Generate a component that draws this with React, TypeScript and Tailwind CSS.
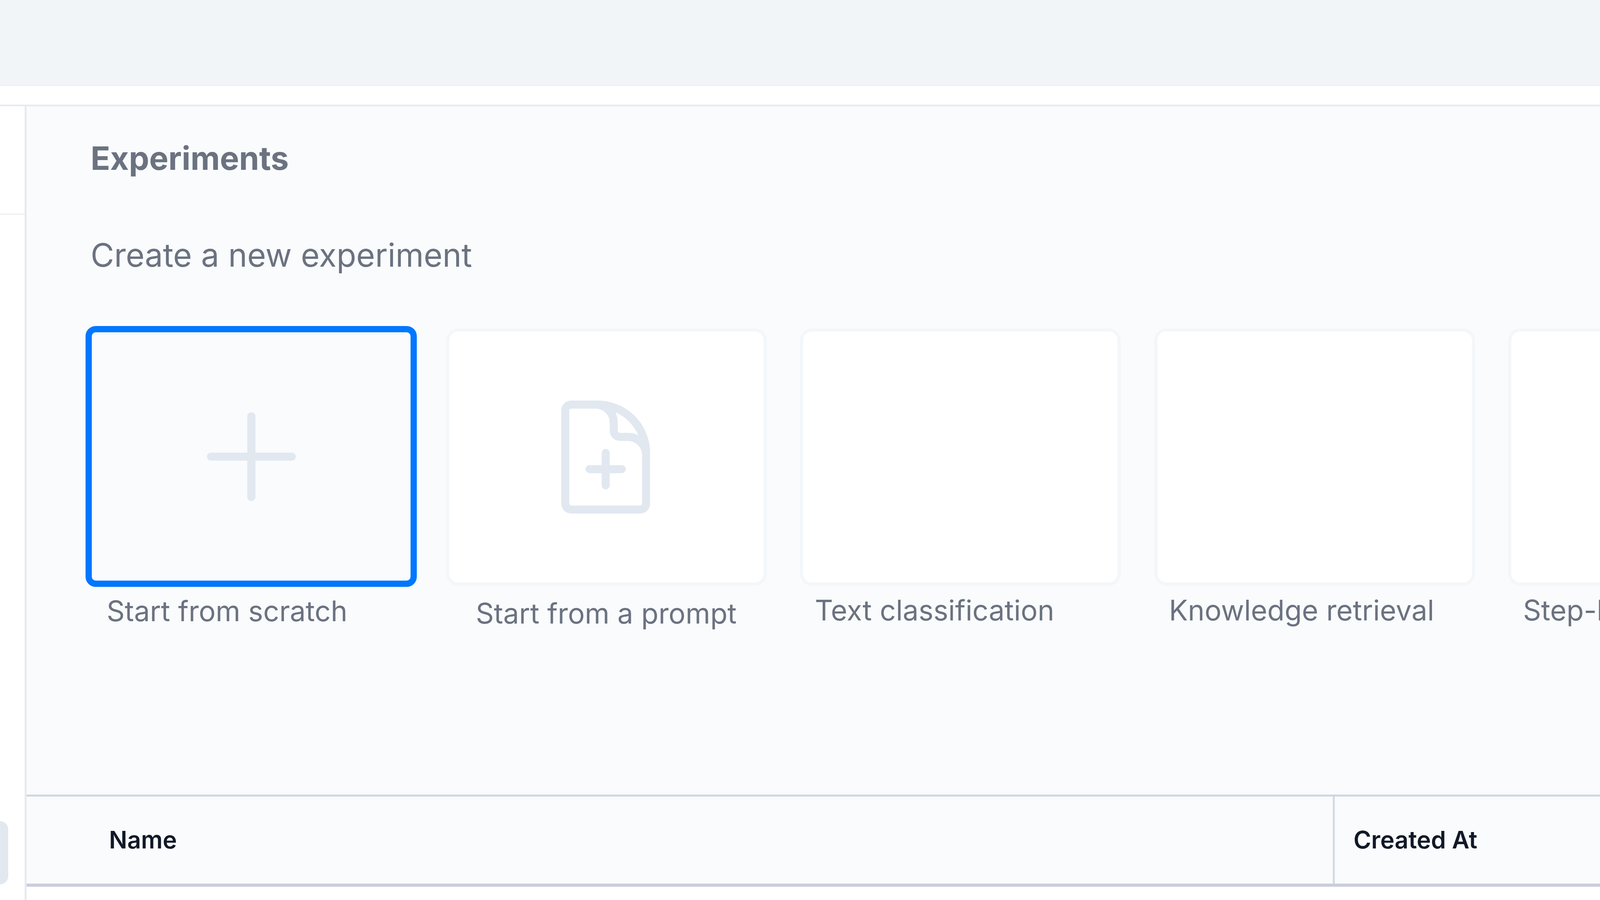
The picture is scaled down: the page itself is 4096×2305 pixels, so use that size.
import React from 'react';

const FONT = 'font-["Inter","Liberation_Sans",sans-serif]';

const PlusIcon = () => (
  <svg className="w-[331px] h-[331px]" viewBox="0 0 24 24" fill="none" stroke="#e2e8f0" strokeWidth={1.5} strokeLinecap="round" strokeLinejoin="round">
    <path d="M12 4.5v15m7.5-7.5h-15" />
  </svg>
);

const DocumentPlusIcon = () => (
  <svg className="w-[331px] h-[331px] mr-[4px]" viewBox="0 0 24 24" fill="none" stroke="#e2e8f0" strokeWidth={1.5} strokeLinecap="round" strokeLinejoin="round">
    <path d="M19.5 14.25v-2.625a3.375 3.375 0 00-3.375-3.375h-1.5A1.125 1.125 0 0113.5 7.125v-1.5a3.375 3.375 0 00-3.375-3.375H8.25m3.75 9v6m3-3H9m1.5-12H5.625c-.621 0-1.125.504-1.125 1.125v17.25c0 .621.504 1.125 1.125 1.125h12.75c.621 0 1.125-.504 1.125-1.125V11.25a9 9 0 00-9-9z" />
  </svg>
);

const Label = ({ children, className }: { children: React.ReactNode; className: string }) => (
  <div className={`text-[72.2px] leading-[88px] text-[#6b7280] whitespace-nowrap ${className}`}>{children}</div>
);

const TemplateCard = ({ label, children }: { label: string; children?: React.ReactNode }) => (
  <div className="w-[821px] shrink-0 flex flex-col">
    <div className="h-[659px] rounded-[31px] border-[8px] border-[#f4f7f9] bg-white flex items-center justify-center">
      {children}
    </div>
    <Label className="mt-[19px] pl-[38px]">{label}</Label>
  </div>
);

export default function App() {
  return (
    <div className={`w-[4096px] h-[2305px] overflow-hidden bg-white flex flex-col ${FONT}`}>
      <div className="h-[220px] shrink-0 bg-[#f1f5f8] border-b-[2px] border-[#e9edf1]" />
      <div className="h-[48px] shrink-0 bg-white" />
      <div className="flex-1 flex border-t-[4px] border-[#e6e9f2] min-h-0">
        {/* sidebar rail */}
        <div className="w-[68px] shrink-0 border-r-[5px] border-[#e8eaf0] flex flex-col">
          <div className="h-[278px] shrink-0 border-b-[3px] border-[#eceef2]" />
          <div className="mt-[1553px] w-[21px] h-[162px] bg-[#e2e8f0] rounded-r-[22px]" />
        </div>

        {/* experiments page */}
        <div className="flex-1 min-w-0 flex flex-col">
          <div className="bg-[#f9fbfc] h-[1763px] shrink-0 flex flex-col">
            <div className="pl-[164px] pt-[83px] text-[82.5px] leading-[100px] font-bold text-[#6b7280]">Experiments</div>
            <div className="pl-[164px] mt-[148px] text-[82.5px] leading-[100px] text-[#6b7280] whitespace-nowrap">Create a new experiment</div>

            <div className="flex items-start mt-[132px] pl-[151px] h-[760px]">
              <div className="w-[848px] shrink-0 mr-[74.5px] flex flex-col">
                <div className="h-[668px] rounded-[26px] border-[16px] border-[#0077ff] bg-[#f9fbfc] flex items-center justify-center">
                  <PlusIcon />
                </div>
                <Label className="mt-[18px] pl-[54px]">Start from scratch</Label>
              </div>
              <div className="flex gap-[85.5px]">
                <div className="w-[821px] shrink-0 mt-[6px] flex flex-col">
                  <div className="h-[659px] rounded-[31px] border-[8px] border-[#f4f7f9] bg-white flex items-center justify-center">
                    <DocumentPlusIcon />
                  </div>
                  <Label className="mt-[27px] text-center">Start from a prompt</Label>
                </div>
                <div className="mt-[6px] flex gap-[85.5px]">
                  <TemplateCard label="Text classification" />
                  <TemplateCard label="Knowledge retrieval" />
                  <TemplateCard label="Step-by-step" />
                </div>
              </div>
            </div>
          </div>

          <div className="h-[236px] shrink-0 bg-[#f9fbfc] border-t-[5px] border-b-[8px] border-t-[#cfd6e2] border-b-[#c9cddc] flex text-[61.5px] font-semibold text-[#111827]">
            <div className="w-[3349px] shrink-0 border-r-[5px] border-[#d3dae5] pl-[211px] flex items-center">Name</div>
            <div className="flex-1 pl-[48px] flex items-center whitespace-nowrap">Created At</div>
          </div>
        </div>
      </div>
    </div>
  );
}
